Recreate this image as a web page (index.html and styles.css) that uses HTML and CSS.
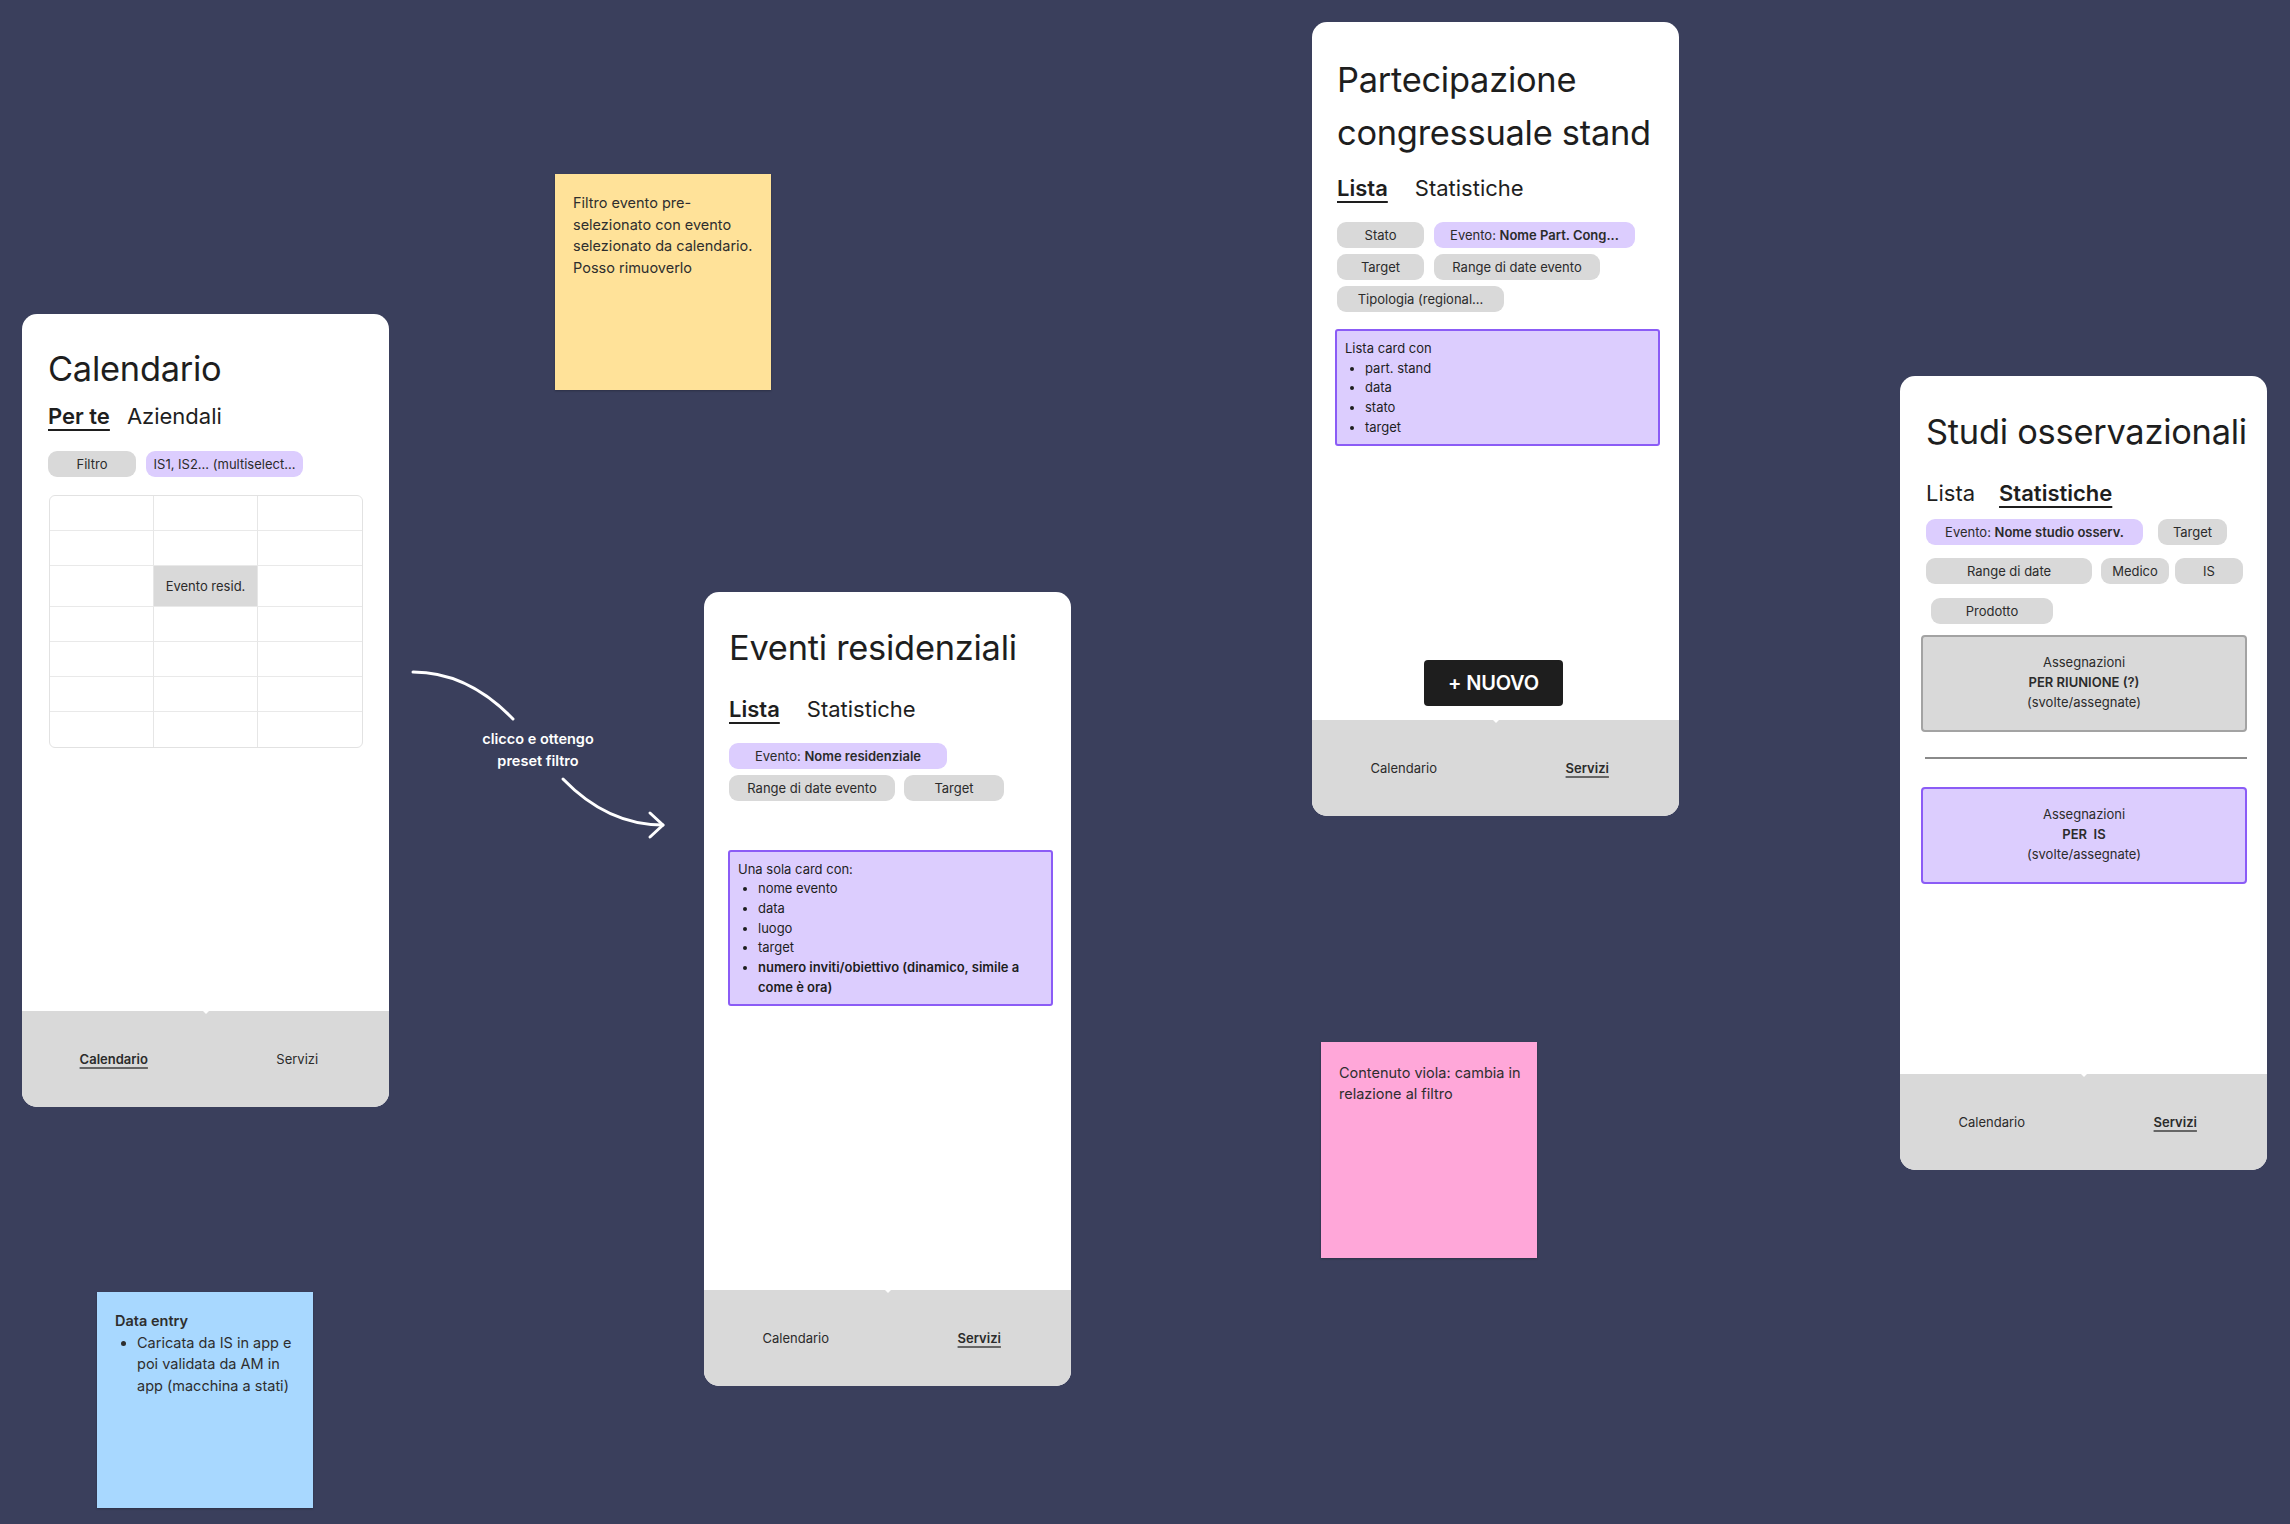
FILE: index.html
```html
<!DOCTYPE html>
<html lang="it">
<head>
<meta charset="utf-8">
<title>Flusso app</title>
<link rel="stylesheet" href="styles.css">
</head>
<body>
<div class="board">

  <!-- Phone 1: Calendario -->
  <section class="phone phone-cal">
    <div class="phone-body">
      <h1 class="title">Calendario</h1>
      <div class="tabs tabs-tight">
        <span class="tab active">Per te</span>
        <span class="tab">Aziendali</span>
      </div>
      <div class="chips chips-cal">
        <div class="chip-row">
          <span class="chip w-88">Filtro</span>
          <span class="chip chip-purple w-157">IS1, IS2... (multiselect...</span>
        </div>
      </div>
      <div class="calendar">
        <div class="cell"></div><div class="cell"></div><div class="cell"></div>
        <div class="cell"></div><div class="cell"></div><div class="cell"></div>
        <div class="cell"></div><div class="cell cell-event">Evento resid.</div><div class="cell"></div>
        <div class="cell"></div><div class="cell"></div><div class="cell"></div>
        <div class="cell"></div><div class="cell"></div><div class="cell"></div>
        <div class="cell"></div><div class="cell"></div><div class="cell"></div>
        <div class="cell"></div><div class="cell"></div><div class="cell"></div>
      </div>
    </div>
    <nav class="bottom-nav">
      <span class="nav-item active">Calendario</span>
      <span class="nav-item">Servizi</span>
    </nav>
  </section>

  <!-- Phone 2: Eventi residenziali -->
  <section class="phone phone-res">
    <div class="phone-body">
      <h1 class="title">Eventi residenziali</h1>
      <div class="tabs">
        <span class="tab active">Lista</span>
        <span class="tab">Statistiche</span>
      </div>
      <div class="chips chips-res">
        <div class="chip-row">
          <span class="chip chip-purple w-218">Evento: <b>Nome residenziale</b></span>
        </div>
        <div class="chip-row">
          <span class="chip w-166">Range di date evento</span>
          <span class="chip w-100">Target</span>
        </div>
      </div>
      <div class="card card-res">
        <p>Una sola card con:</p>
        <ul>
          <li>nome evento</li>
          <li>data</li>
          <li>luogo</li>
          <li>target</li>
          <li><b>numero inviti/obiettivo (dinamico, simile a come è ora)</b></li>
        </ul>
      </div>
    </div>
    <nav class="bottom-nav">
      <span class="nav-item">Calendario</span>
      <span class="nav-item active">Servizi</span>
    </nav>
  </section>

  <!-- Phone 3: Partecipazione congressuale stand -->
  <section class="phone phone-pc">
    <div class="phone-body">
      <h1 class="title">Partecipazione<br>congressuale stand</h1>
      <div class="tabs">
        <span class="tab active">Lista</span>
        <span class="tab">Statistiche</span>
      </div>
      <div class="chips chips-pc">
        <div class="chip-row">
          <span class="chip w-87">Stato</span>
          <span class="chip chip-purple w-201">Evento: <b>Nome Part. Cong...</b></span>
        </div>
        <div class="chip-row">
          <span class="chip w-87">Target</span>
          <span class="chip w-166">Range di date evento</span>
        </div>
        <div class="chip-row">
          <span class="chip w-167">Tipologia (regional...</span>
        </div>
      </div>
      <div class="card card-pc">
        <p>Lista card con</p>
        <ul>
          <li>part. stand</li>
          <li>data</li>
          <li>stato</li>
          <li>target</li>
        </ul>
      </div>
      <button class="btn-new">+ NUOVO</button>
    </div>
    <nav class="bottom-nav">
      <span class="nav-item">Calendario</span>
      <span class="nav-item active">Servizi</span>
    </nav>
  </section>

  <!-- Phone 4: Studi osservazionali -->
  <section class="phone phone-so">
    <div class="phone-body">
      <h1 class="title">Studi osservazionali</h1>
      <div class="tabs tabs-so">
        <span class="tab">Lista</span>
        <span class="tab active">Statistiche</span>
      </div>
      <div class="chips chips-so">
        <div class="chip-row gap-15">
          <span class="chip chip-purple w-217">Evento: <b>Nome studio osserv.</b></span>
          <span class="chip w-69">Target</span>
        </div>
        <div class="chip-row">
          <span class="chip w-166">Range di date</span>
          <span class="chip w-68">Medico</span>
          <span class="chip w-68 ml-neg">IS</span>
        </div>
        <div class="chip-row indent">
          <span class="chip w-122">Prodotto</span>
        </div>
      </div>
      <div class="stat-box stat-gray">
        <span>Assegnazioni</span>
        <b>PER RIUNIONE (?)</b>
        <span>(svolte/assegnate)</span>
      </div>
      <hr class="separator">
      <div class="stat-box stat-purple">
        <span>Assegnazioni</span>
        <b>PER&nbsp; IS</b>
        <span>(svolte/assegnate)</span>
      </div>
    </div>
    <nav class="bottom-nav">
      <span class="nav-item">Calendario</span>
      <span class="nav-item active">Servizi</span>
    </nav>
  </section>

  <!-- Sticky notes -->
  <div class="note note-yellow">
    <p>Filtro evento pre-<br>selezionato con evento<br>selezionato da calendario.<br>Posso rimuoverlo</p>
  </div>

  <div class="note note-pink">
    <p>Contenuto viola: cambia in<br>relazione al filtro</p>
  </div>

  <div class="note note-blue">
    <p class="note-head">Data entry</p>
    <ul>
      <li>Caricata da IS in app e<br>poi validata da AM in<br>app (macchina a stati)</li>
    </ul>
  </div>

  <!-- Connector -->
  <svg class="connector" width="300" height="240" viewBox="400 640 300 240" aria-hidden="true">
    <path d="M413 672 C 455 672 488 693 513 719" />
    <path d="M563 779 C 590 807 622 825 663 825" />
    <path d="M650 813 L663 825 L650 837" />
  </svg>
  <div class="connector-label">clicco e ottengo<br>preset filtro</div>

</div>
</body>
</html>
```

FILE: styles.css
```css
* { box-sizing: border-box; }

html, body {
  margin: 0;
  padding: 0;
}

body {
  background: #3a3f5c;
  font-family: "Inter", "Liberation Sans", Arial, sans-serif;
  color: #1e1e1e;
}

.board {
  position: relative;
  width: 2290px;
  height: 1524px;
  overflow: hidden;
}

/* ---------- Phones ---------- */
.phone {
  position: absolute;
  width: 367px;
  height: 794px;
  background: #ffffff;
  border-radius: 15px;
  overflow: hidden;
  display: flex;
  flex-direction: column;
}

.phone-cal { left: 22px;   top: 314px; height: 793px; }
.phone-res { left: 704px;  top: 592px; }
.phone-pc  { left: 1312px; top: 22px; }
.phone-so  { left: 1900px; top: 376px; }

.phone-body {
  flex: 1;
  display: flex;
  flex-direction: column;
  align-items: flex-start;
  padding: 30px 25px 0;
}

.phone-cal .phone-body { padding: 29px 26px 0; }
.phone-pc .phone-body  { padding-top: 32px; }
.phone-so .phone-body  { padding-left: 26px; }

.title {
  margin: 0;
  font-size: 34.4px;
  font-weight: 400;
  line-height: 52.5px;
  letter-spacing: -0.25px;
  white-space: nowrap;
  color: #1e1e1e;
}

/* tabs */
.tabs {
  display: flex;
  gap: 27px;
  margin-top: 19px;
  font-size: 22px;
  line-height: 30px;
  color: #1e1e1e;
}

.tabs-tight { gap: 17px; margin-top: 5px; }
.tabs-so { gap: 24px; }
.phone-pc .tabs { margin-top: 14px; }

.tab.active {
  font-weight: 600;
  text-decoration: underline;
  text-decoration-thickness: 2px;
  text-underline-offset: 5px;
}

/* chips */
.chips {
  display: flex;
  flex-direction: column;
  gap: 6px;
  margin-top: 19px;
}

.chips-cal { margin-top: 20px; }
.chips-pc  { gap: 6px; }
.chips-so  { margin-top: 11px; gap: 13.5px; }

.chip-row {
  display: flex;
  gap: 10px;
}

.chips-res .chip-row { gap: 9px; }
.chips-so .chip-row { gap: 9px; }
.chips-so .chip-row.gap-15 { gap: 15px; }
.chip-row.indent { padding-left: 5px; }
.ml-neg { margin-left: -3px; }

.chip {
  display: block;
  height: 26px;
  line-height: 26px;
  border-radius: 9px;
  background: #d9d9d9;
  text-align: center;
  font-size: 13px;
  color: #2b2b2b;
  white-space: nowrap;
}

.chip b { font-weight: 600; }
.chip-purple { background: #dccdfe; }

.w-68  { width: 68px; }
.w-69  { width: 69px; }
.w-87  { width: 87px; }
.w-88  { width: 88px; }
.w-100 { width: 100px; }
.w-122 { width: 122px; }
.w-157 { width: 157px; }
.w-166 { width: 166px; }
.w-167 { width: 167px; }
.w-201 { width: 201px; }
.w-217 { width: 217px; }
.w-218 { width: 218px; }

/* calendar grid */
.calendar {
  margin-top: 18px;
  margin-left: 1px;
  width: 314px;
  display: grid;
  grid-template-columns: repeat(3, 1fr);
  grid-template-rows: 35px 35px 41px 35px 35px 35px 35px;
  border: 1px solid #e2e2e2;
  border-radius: 6px;
  overflow: hidden;
  background: #ffffff;
}

.cell {
  border-right: 1px solid #e6e6e6;
  border-bottom: 1px solid #e9e9e9;
}
.cell:nth-child(3n) { border-right: none; }
.cell:nth-last-child(-n+3) { border-bottom: none; }

.cell-event {
  background: #d9d9d9;
  display: flex;
  align-items: center;
  justify-content: center;
  font-size: 13px;
  color: #2b2b2b;
}

/* purple content cards */
.card {
  width: 325px;
  background: #dccdfe;
  border: 2px solid #8b5cf6;
  border-radius: 3px;
  font-size: 13px;
  line-height: 19.7px;
  color: #1e1e1e;
}

.card p { margin: 0; }
.card ul { margin: 0; padding-left: 20px; }
.card li b { font-weight: 600; }

.card-res {
  margin-top: 49px;
  margin-left: -1px;
  padding: 8px 30px 7px 8px;
}

.card-pc {
  margin-top: 17px;
  margin-left: -2px;
  height: 117px;
  padding: 8px 10px 0 8px;
}

.btn-new {
  align-self: center;
  margin: auto 0 14px -4px;
  width: 139px;
  height: 46px;
  border: none;
  border-radius: 4px;
  background: #1e1e1e;
  color: #ffffff;
  font-family: inherit;
  font-size: 20px;
  font-weight: 600;
  letter-spacing: -0.2px;
}

/* statistic boxes */
.stat-box {
  width: 326px;
  height: 97px;
  margin-left: -5px;
  border-radius: 4px;
  border: 2px solid #a3a3a3;
  background: #d9d9d9;
  display: flex;
  flex-direction: column;
  align-items: center;
  justify-content: center;
  font-size: 13px;
  line-height: 19.7px;
  color: #2b2b2b;
}

.stat-box b { font-weight: 600; }

.stat-gray { margin-top: 11px; }

.stat-purple {
  background: #dccdfe;
  border-color: #8b5cf6;
  margin-top: 28px;
}

.separator {
  width: 322px;
  margin: 25px 0 0 -1px;
  border: none;
  border-top: 2px solid #8a8a8a;
  height: 0;
}

/* bottom navigation */
.bottom-nav {
  position: relative;
  height: 96px;
  flex: none;
  display: grid;
  grid-template-columns: 1fr 1fr;
  background: #d9d9d9;
}

.bottom-nav::after {
  content: "";
  position: absolute;
  top: 0;
  left: 50%;
  margin-left: -3px;
  border-left: 3px solid transparent;
  border-right: 3px solid transparent;
  border-top: 3px solid #ffffff;
}

.nav-item {
  display: flex;
  align-items: center;
  justify-content: center;
  font-size: 13px;
  color: #2b2b2b;
}

.nav-item.active {
  font-weight: 600;
  text-decoration: underline;
  text-decoration-thickness: 1.5px;
  text-underline-offset: 3px;
  text-decoration-color: #666666;
}

/* ---------- Sticky notes ---------- */
.note {
  position: absolute;
  width: 216px;
  height: 216px;
  padding: 18px 10px 0 18px;
  font-size: 14.5px;
  line-height: 21.5px;
  color: #2e2e2e;
  box-shadow: 0 1px 2px rgba(0, 0, 0, 0.25);
}

.note p { margin: 0; white-space: nowrap; }

.note-yellow { left: 555px;  top: 174px;  background: #ffe299; }
.note-pink   { left: 1321px; top: 1042px; background: #ffa7d9; padding-top: 20px; line-height: 21px; }
.note-blue   { left: 97px;   top: 1292px; background: #a8d8ff; }

.note-head { font-weight: 600; }

.note-blue ul {
  margin: 0;
  padding-left: 22px;
  white-space: nowrap;
}

/* ---------- Connector ---------- */
.connector {
  position: absolute;
  left: 400px;
  top: 640px;
  fill: none;
  stroke: #ffffff;
  stroke-width: 3;
  stroke-linecap: round;
  stroke-linejoin: round;
}

.connector-label {
  position: absolute;
  left: 458px;
  top: 728px;
  width: 160px;
  text-align: center;
  font-size: 14.5px;
  line-height: 22px;
  font-weight: 600;
  color: #ffffff;
}
```
